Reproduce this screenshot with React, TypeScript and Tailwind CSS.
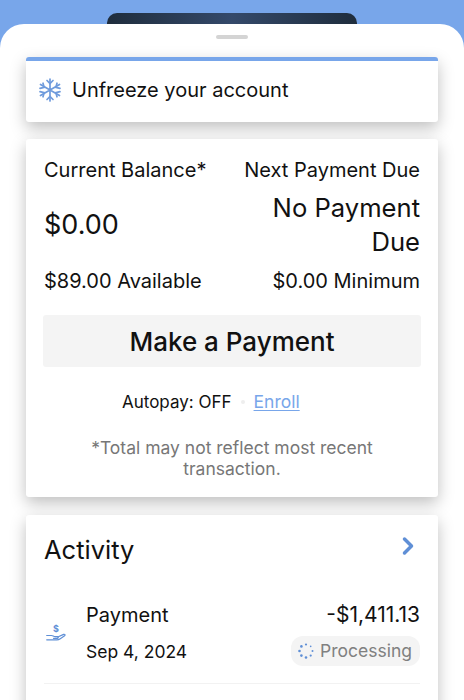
import React from 'react'
import { ChevronRight } from 'lucide-react'

const SnowflakeIcon = (): React.ReactNode => (
  <svg width="24" height="24" viewBox="0 0 24 24" fill="none" stroke="#6f9bdc" strokeWidth="1.7" strokeLinecap="round">
    <path d="M12 1v22M2.500 6.500l19 11M21.500 6.500l-19 11" />
    <path d="M9 2.500l3 3 3-3M9 21.500l3-3 3 3" />
    <path d="M2 10.400l4.100-1.100L5 5.200M22 13.600l-4.100 1.100 1.100 4.100" />
    <path d="M19 5.200l-1.100 4.100 4.100 1.100M5 18.800l1.100-4.100-4.100-1.100" />
  </svg>
)

const HandIcon = (): React.ReactNode => (
  <svg width="20" height="20" viewBox="0 0 20 20" fill="none" stroke="#5f8fd6" strokeWidth="1.2" strokeLinecap="round" strokeLinejoin="round">
    <path d="M0.700 11.500h4.800c1.500 0 2 1.200 3.800 1.200h2.200c1 0 1 1.600 0 1.600H7.500" />
    <path d="M11.800 13l5.800-2.600c1.200-.5 2 .6 1 1.300l-4.300 3c-1.200.8-2.200 1.100-3.500 1.100H0.700" />
    <text x="10" y="7.500" fontSize="9" fontWeight="700" fill="#5f8fd6" stroke="none" textAnchor="middle" fontFamily="Inter, sans-serif">$</text>
  </svg>
)

const SpinnerIcon = (): React.ReactNode => (
  <svg width="16" height="16" viewBox="0 0 16 16" fill="#5f8fd6">
    <circle cx="8" cy="1.500" r="1.100" />
    <circle cx="12.700" cy="3.400" r="0.800" />
    <circle cx="14.500" cy="8" r="1" />
    <circle cx="12.700" cy="12.600" r="1.100" />
    <circle cx="8" cy="14.500" r="1.300" />
    <circle cx="3.400" cy="12.600" r="1.300" />
    <circle cx="1.500" cy="8" r="1.300" />
    <circle cx="3.400" cy="3.400" r="1.300" />
  </svg>
)

const cardClass = 'mx-[26px] bg-white rounded-[3px] shadow-[0_6px_16px_rgba(0,0,0,0.25)]'

export default function App(): React.ReactNode {
  return (
    <div className="h-[700px] w-[464px] overflow-hidden bg-[#78a6ea] font-['Inter',sans-serif] text-[#111]">
      <div className="flex h-[24px] justify-center pt-[13px]">
        <div className="h-[11px] w-[250px] rounded-t-[10px] bg-gradient-to-r from-[#1f2d3d] via-[#34496a] to-[#1f2d3d]" />
      </div>
      <div className="h-[676px] rounded-t-[24px] bg-white">
        <div className="flex justify-center pt-[11px]">
          <div className="h-[4px] w-[32px] rounded-full bg-[#d4d4d4]" />
        </div>
        <div className={`${cardClass} mt-[18px] flex h-[65px] items-center gap-[10px] border-t-[4px] border-[#78a6ea] pb-[4px] pl-[12px]`}>
          <SnowflakeIcon />
          <span className="text-[20px] leading-[24px]">Unfreeze your account</span>
        </div>

        <div className={`${cardClass} mt-[17px] h-[358px] px-[18px] pt-[19px]`}>
          <div className="flex justify-between text-[20px] leading-[24px]">
            <span>Current Balance*</span>
            <span>Next Payment Due</span>
          </div>
          <div className="mt-[9px] flex items-center justify-between">
            <span className="text-[27px] leading-[34px]">$0.00</span>
            <span className="w-[170px] text-right text-[25.6px] leading-[34px]">No Payment Due</span>
          </div>
          <div className="mt-[10px] flex justify-between text-[20px] leading-[24px]">
            <span>$89.00 Available</span>
            <span>$0.00 Minimum</span>
          </div>
          <button className="-mx-[1px] mt-[22px] flex h-[52px] w-[378px] items-center justify-center rounded-[3px] bg-[#f4f4f4] text-[26px] font-medium">
            Make a Payment
          </button>
          <div className="mt-[24px] flex items-center pl-[78px] text-[17px] leading-[22px]">
            <span>Autopay: OFF</span>
            <span className="mx-[9px] h-[4px] w-[4px] rounded-full bg-[#eeeeee]" />
            <span className="text-[17.5px] text-[#78a6ea] underline underline-offset-2">Enroll</span>
          </div>
          <p className="mt-[24px] text-center text-[17.5px] leading-[21px] text-[#777]">
            *Total may not reflect most recent transaction.
          </p>
        </div>

        <div className={`${cardClass} mt-[18px] h-[300px] px-[18px] pt-[17px]`}>
          <div className="flex justify-between">
            <span className="text-[25.5px] leading-[36px]">Activity</span>
            <ChevronRight size={28} strokeWidth={3} className="-mr-[2px] text-[#5f8fd6]" />
          </div>
          <div className="mt-[33px] flex items-center border-b border-[#f2f2f2] pb-[17px]">
            <div className="ml-[2px]">
              <HandIcon />
            </div>
            <div className="ml-[20px] flex flex-col gap-[13px] leading-[24px]">
              <span className="text-[20px]">Payment</span>
              <span className="text-[17.5px]">Sep 4, 2024</span>
            </div>
            <div className="ml-auto mt-[2px] flex flex-col items-end gap-[9px]">
              <span className="text-[21px] leading-[24px]">-$1,411.13</span>
              <span className="flex h-[30px] items-center gap-[6px] rounded-[12px] bg-[#f4f4f4] pl-[7px] pr-[8px] text-[17.5px] text-[#808080]">
                <SpinnerIcon />
                Processing
              </span>
            </div>
          </div>
        </div>
      </div>
    </div>
  )
}
